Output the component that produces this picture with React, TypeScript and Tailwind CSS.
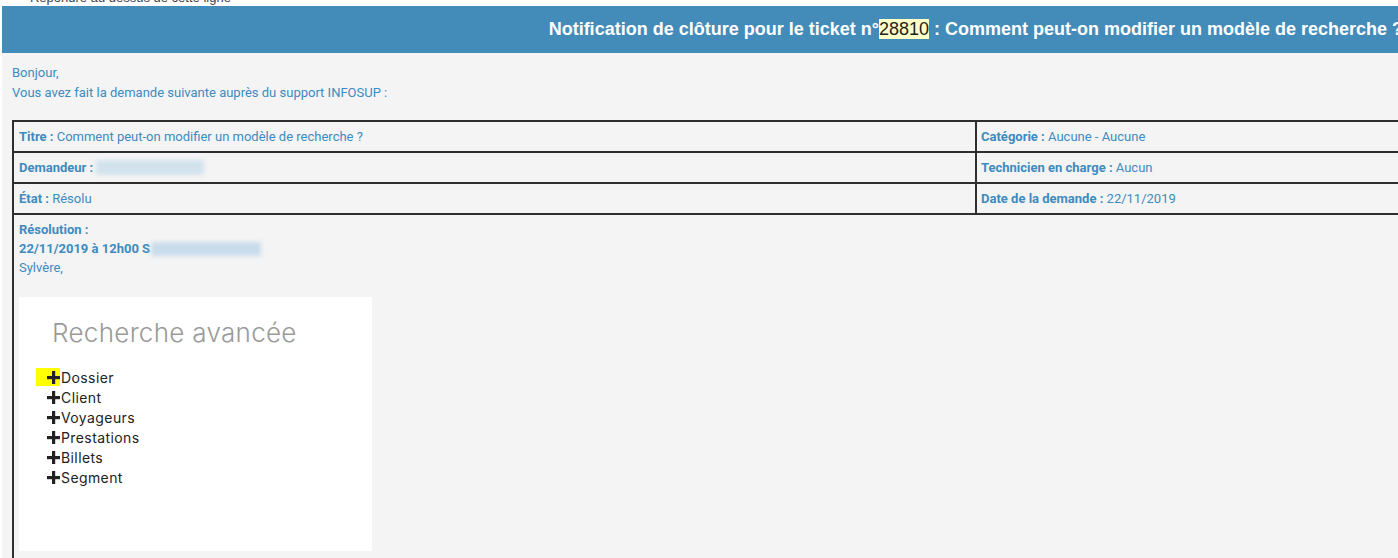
const rows = [
  { l: 'Titre : ', lv: 'Comment peut-on modifier un modèle de recherche ?', r: 'Catégorie : ', rv: 'Aucune - Aucune' },
  { l: 'Demandeur : ', lv: null, r: 'Technicien en charge : ', rv: 'Aucun' },
  { l: 'État : ', lv: 'Résolu', r: 'Date de la demande : ', rv: '22/11/2019' },
];

const items = ['Dossier', 'Client', 'Voyageurs', 'Prestations', 'Billets', 'Segment'];

function Plus() {
  return (
    <svg width="13" height="13" viewBox="0 0 13 13" className="shrink-0">
      <rect x="5" y="0" width="3.2" height="13" fill="#222" />
      <rect x="0" y="5" width="13" height="3.2" fill="#222" />
    </svg>
  );
}

function Screenshot() {
  return (
    <div className="mt-[20px] h-[254px] w-[353px] bg-white pt-[21px]">
      <div className="pl-[33px] font-['Inter',sans-serif] text-[26px] font-light leading-[30px] tracking-[0.3px] text-[#9a9a9a]">
        Recherche avancée
      </div>
      <div className="mt-[19px] flex flex-col">
        {items.map((it, i) => (
          <div key={it} className="flex h-[20px] items-center font-['Inter',sans-serif] text-[14px] tracking-[0.4px] text-[#222]">
            <div className={`ml-[17px] flex h-[18px] w-[24px] items-center justify-end ${i === 0 ? 'bg-[#ffff00]' : ''}`}>
              <Plus />
            </div>
            <span className="pl-[1px]">{it}</span>
          </div>
        ))}
      </div>
    </div>
  );
}

export default function App() {
  return (
    <div className="h-[558px] w-[1398px] overflow-hidden bg-white font-['Roboto',sans-serif]">
      <div className="w-[1420px]">
        <div className="h-[6px] overflow-hidden bg-white">
          <div className="-mt-[10px] pl-[22px] font-['Liberation_Sans',sans-serif] text-[13px] leading-[16px] text-[#444]">
            - Répondre au dessus de cette ligne
          </div>
        </div>
        <div className="ml-[2px] flex h-[47px] items-center justify-end bg-[#438cb9] pr-[17px] font-['Liberation_Sans',sans-serif] text-[18px] font-bold text-white">
          <span>
            Notification de clôture pour le ticket n°
            <span className="bg-[#ffffc8] font-normal text-[#222]">28810</span> : Comment peut-on modifier un modèle de recherche ?
          </span>
        </div>
        <div className="ml-[2px] bg-[#f4f4f4] pl-[10px] pt-[10px] text-[13px] text-[#3d8bbf]">
          <div className="leading-[20px]">Bonjour,</div>
          <div className="leading-[20px]">Vous avez fait la demande suivante auprès du support INFOSUP :</div>
          <table className="mt-[17px] w-[1400px] border-separate border-spacing-0 border border-[#2e2e2e]">
            <tbody>
              {rows.map((r) => (
                <tr key={r.l} className="h-[31px]">
                  <td className="w-[963px] border border-[#2e2e2e] pl-[5px] align-middle">
                    <span className="font-bold">{r.l}</span>
                    {r.lv ? (
                      r.lv
                    ) : (
                      <span className="inline-block h-[15px] w-[108px] translate-y-[3px] bg-[#d3e3ee] blur-[2px]" />
                    )}
                  </td>
                  <td className="border border-[#2e2e2e] pl-[4px] align-middle">
                    <span className="font-bold">{r.r}</span>
                    {r.rv}
                  </td>
                </tr>
              ))}
              <tr>
                <td colSpan={2} className="h-[400px] border border-[#2e2e2e] pl-[5px] pt-[5px] align-top leading-[19px]">
                  <div className="font-bold">Résolution :</div>
                  <div className="flex items-center font-bold">
                    22/11/2019 à 12h00 S
                    <span className="ml-[1px] inline-block h-[14px] w-[110px] bg-[#c9dceb] blur-[2px]" />
                  </div>
                  <div>Sylvère,</div>
                  <Screenshot />
                </td>
              </tr>
            </tbody>
          </table>
        </div>
      </div>
    </div>
  );
}
